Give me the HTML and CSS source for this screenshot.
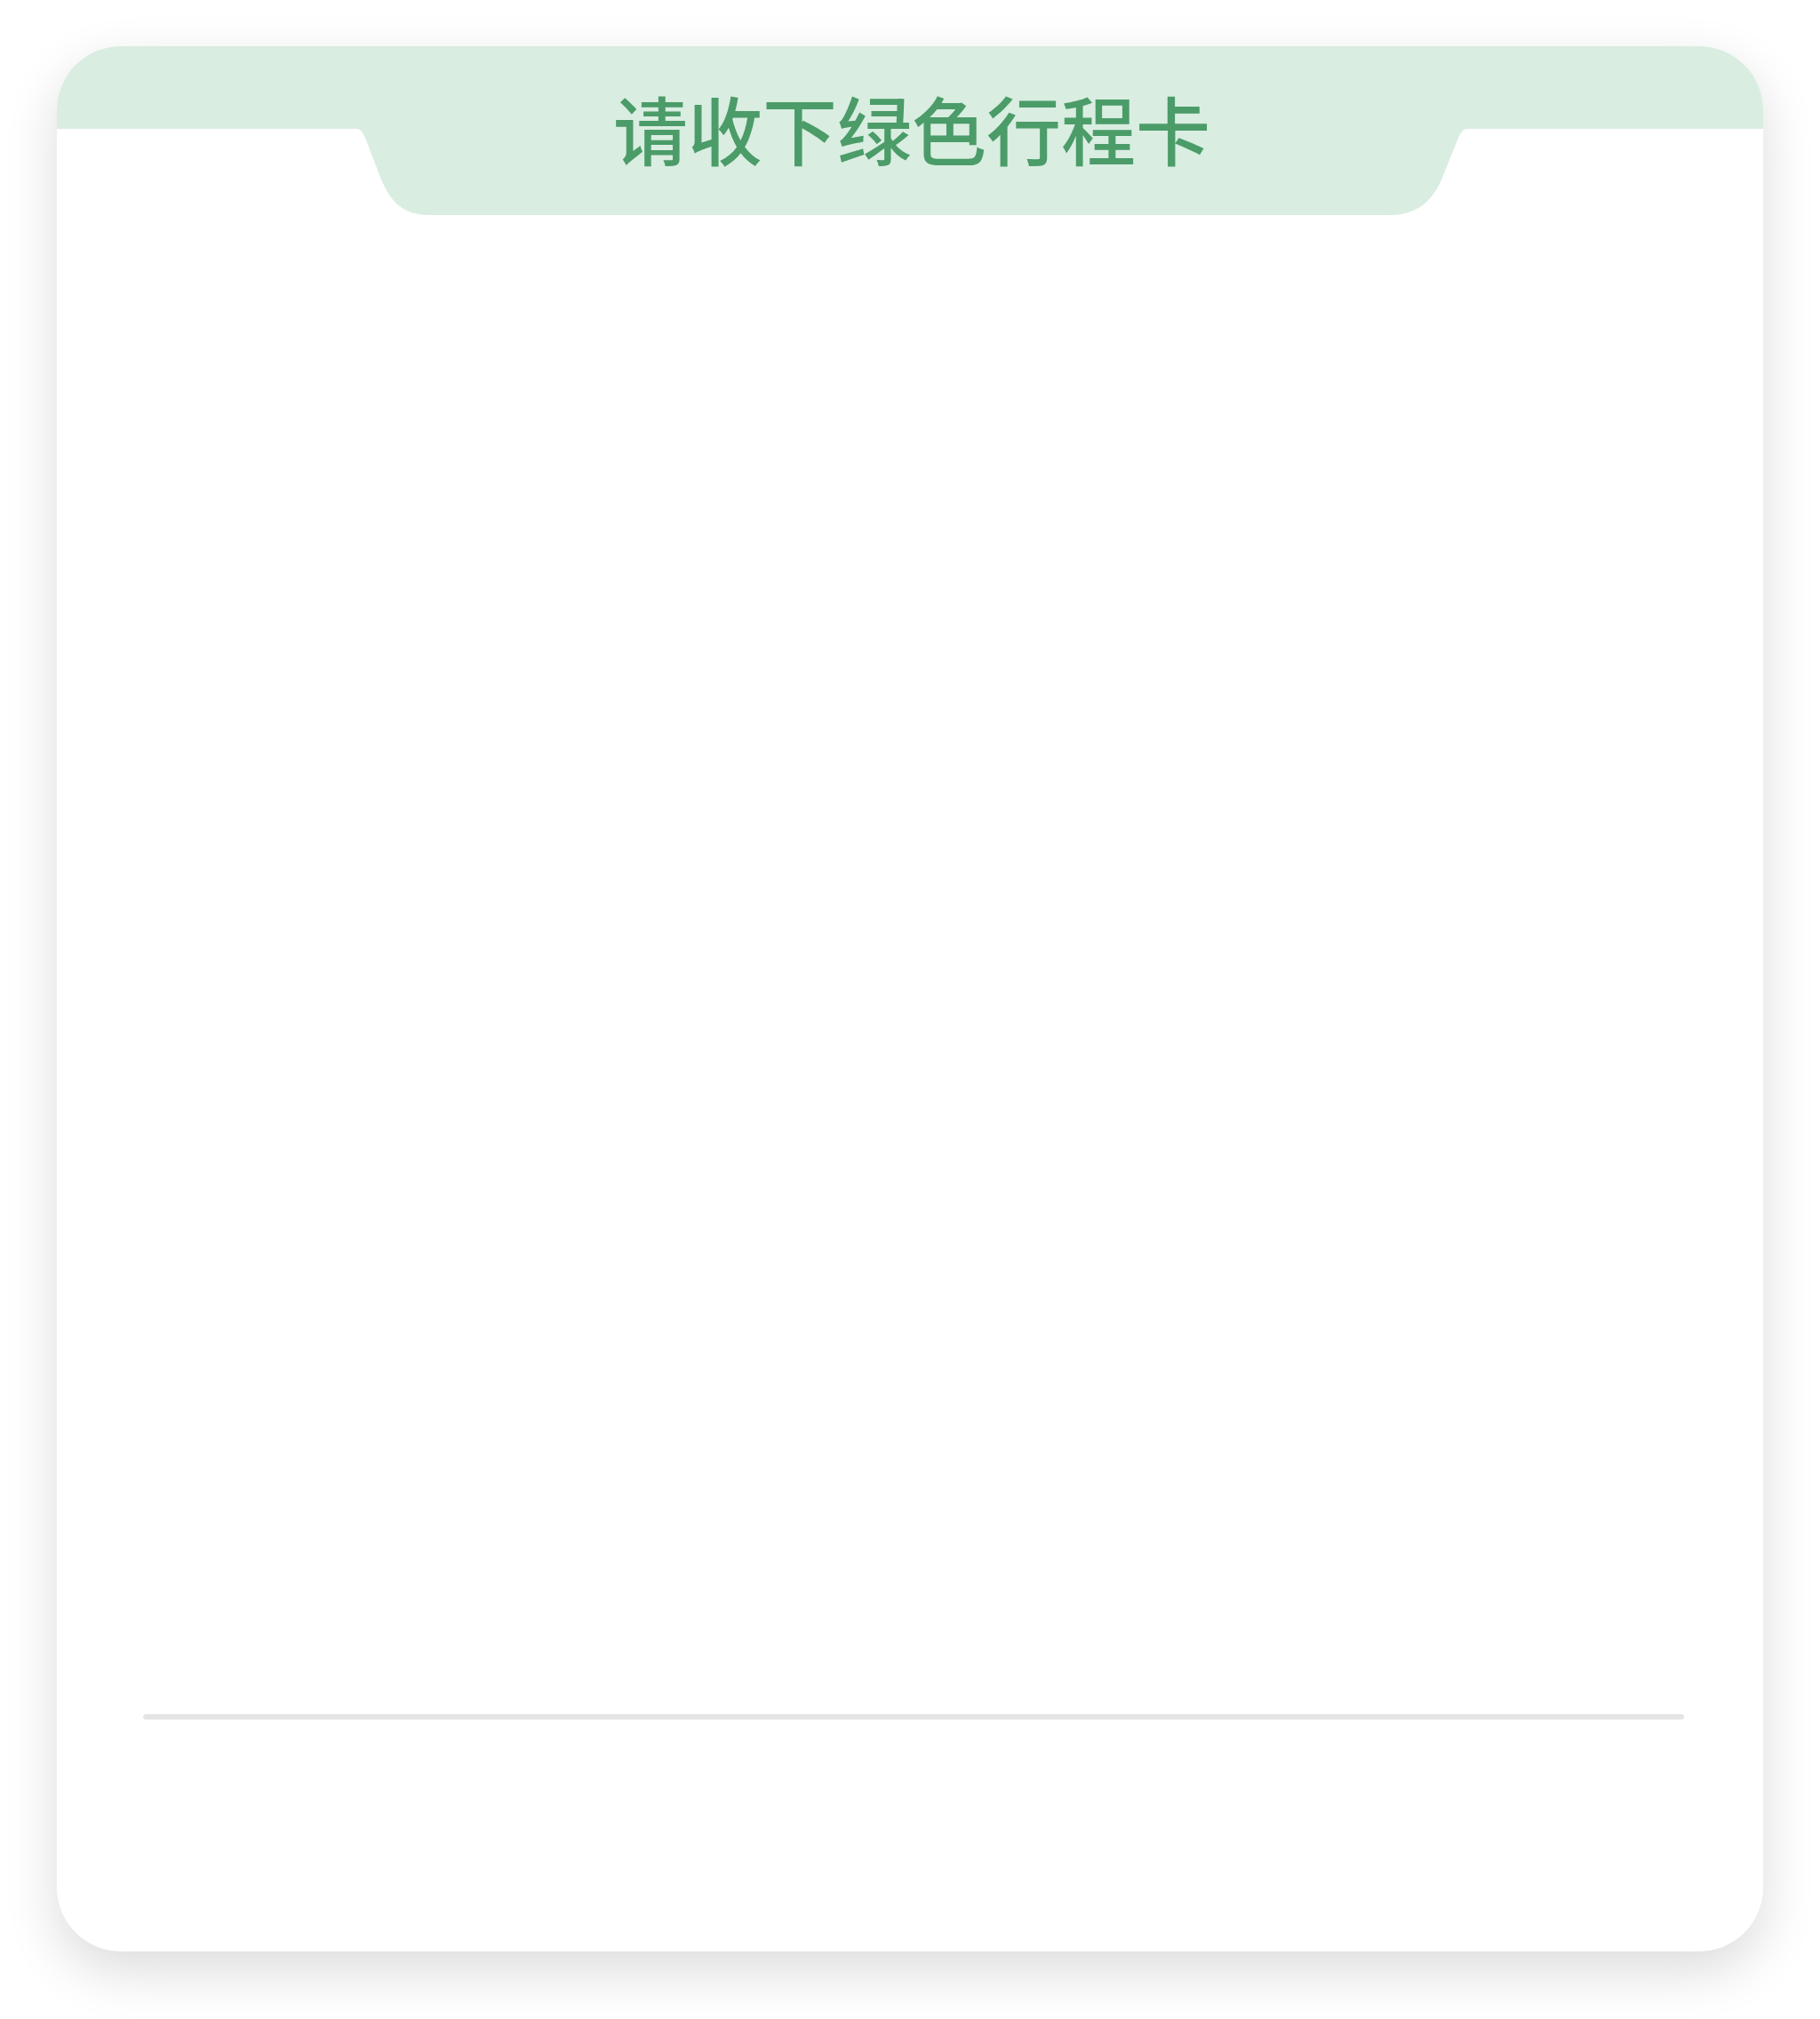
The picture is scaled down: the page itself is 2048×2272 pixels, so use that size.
FILE: index.html
```html
<!DOCTYPE html>
<html lang="zh-CN">
<head>
<meta charset="utf-8">
<title>请收下绿色行程卡</title>
<link rel="stylesheet" href="styles.css">
</head>
<body>
  <div class="card">
    <div class="card-header">
      <div class="tab">
        <h1 class="title">请收下绿色行程卡</h1>
      </div>
    </div>
    <div class="card-body"></div>
    <div class="divider"></div>
    <div class="card-footer"></div>
  </div>
</body>
</html>
```
FILE: styles.css
```css
html, body {
  margin: 0;
  padding: 0;
  background: #ffffff;
}

body {
  width: 2048px;
  height: 2272px;
  font-family: "Noto Sans CJK SC", "Noto Sans", sans-serif;
}

.card {
  margin: 52px 0 0 64px;
  width: 1920px;
  height: 2144px;
  background: #ffffff;
  border-radius: 72px;
  box-shadow: 0 22px 60px rgba(0, 0, 0, 0.14);
  display: flex;
  flex-direction: column;
  overflow: hidden;
}

.card-header {
  height: 190px;
  flex: none;
  display: flex;
  justify-content: flex-start;
  padding-left: 339px;
  background: linear-gradient(#d9ede1, #d9ede1) top left / 100% 93px no-repeat;
}

.tab {
  width: 1246px;
  height: 190px;
  background: #d9ede1;
  clip-path: path("M0 0 H1246 V93 C1242 95 1240 99 1238 103 L1220 148 C1210 172 1194 190 1160 190 H80 C50 190 36 174 26 150 L8 103 C6 99 4 95 0 93 Z");
  display: flex;
  justify-content: center;
}

.title {
  margin: 0;
  padding-top: 50px;
  font-size: 84px;
  line-height: 84px;
  font-weight: 500;
  color: #4b9c68;
  letter-spacing: 0;
}

.card-body {
  flex: 1;
}

.divider {
  flex: none;
  height: 6px;
  margin: 0 89px 0 97px;
  background: #e4e4e4;
  border-radius: 3px;
}

.card-footer {
  flex: none;
  height: 261px;
}
```
